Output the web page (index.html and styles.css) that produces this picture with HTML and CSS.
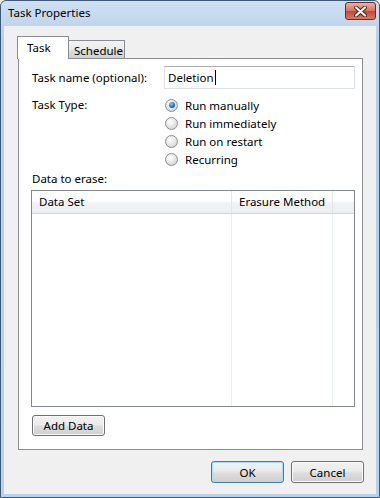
FILE: index.html
```html
<!DOCTYPE html>
<html>
<head>
    <title>Task Properties</title>
    <link rel="stylesheet" href="styles.css">
</head>
<body>
    <div class="window">
        <div class="titlebar">
            <span class="title">Task Properties</span>
            <span class="close">
                <svg width="13" height="11" viewBox="0 0 13 11">
                    <path d="M2 1.5 L11 9.5 M11 1.5 L2 9.5" stroke="#4a1c18" stroke-width="4" stroke-linecap="round"/>
                    <path d="M2 1.5 L11 9.5 M11 1.5 L2 9.5" stroke="#ffffff" stroke-width="2.2" stroke-linecap="round"/>
                </svg>
            </span>
        </div>
        <div class="client">
            <div class="tabs">
                <div class="tab active">Task</div>
                <div class="tab">Schedule</div>
            </div>
            <div class="page">
                <div class="form-grid">
                    <label class="lbl lbl-input" for="nama">Task name (optional):</label>
                    <div class="textbox" id="nama">Deletion<span class="caret"></span></div>

                    <div class="lbl lbl-radio">Task Type:</div>
                    <div class="radios">
                        <div class="radio-row"><span class="radio checked"></span>Run manually</div>
                        <div class="radio-row"><span class="radio"></span>Run immediately</div>
                        <div class="radio-row"><span class="radio"></span>Run on restart</div>
                        <div class="radio-row"><span class="radio"></span>Recurring</div>
                    </div>
                </div>

                <div class="lbl lbl-data">Data to erase:</div>
                <div class="listview">
                    <div class="lv-header">
                        <div class="col col-set">Data Set</div>
                        <div class="col col-method">Erasure Method</div>
                        <div class="col col-fill"></div>
                    </div>
                    <div class="lv-body">
                        <div class="col col-set"></div>
                        <div class="col col-method"></div>
                        <div class="col col-fill"></div>
                    </div>
                </div>

                <button class="btn btn-add" type="button">Add Data</button>
            </div>
            <div class="footer">
                <button class="btn btn-default" type="button">OK</button>
                <button class="btn" type="button">Cancel</button>
            </div>
        </div>
    </div>
</body>
</html>
```
FILE: styles.css
```css
body{
    margin: 0;
    background-color: #ffffff;
    font-family: "Noto Sans", "Open Sans", sans-serif;
    font-size: 11.5px;
    color: #000000;
}

.window{
    width: 380px;
    height: 498px;
    box-sizing: border-box;
    border: 1px solid #3e5877;
    border-radius: 6px 6px 0 0;
    padding: 0 3px 3px 3px;
    background: linear-gradient(#cfe0f3, #b6cfea 40px, #b9d1ea);
    display: flex;
    flex-direction: column;
}

.titlebar{
    height: 25px;
    display: flex;
    align-items: center;
    justify-content: space-between;
    padding-left: 4px;
}

.title{
    font-size: 11.5px;
    padding-bottom: 2px;
}

.close{
    width: 29px;
    height: 16px;
    margin-bottom: 5px;
    border: 1px solid #6b2a24;
    border-radius: 3px;
    background: linear-gradient(#eeb0a2, #d8705f 50%, #c34634 51%, #d77a62);
    display: flex;
    align-items: center;
    justify-content: center;
}

.client{
    flex: 1;
    background-color: #f0f0f0;
    padding: 11px 13px 11px 14px;
    display: flex;
    flex-direction: column;
}

.tabs{
    height: 22px;
    display: flex;
    align-items: flex-end;
    margin-bottom: -1px;
}

.tab{
    height: 19px;
    box-sizing: border-box;
    padding: 0 0 0 5px;
    border: 1px solid #898c95;
    border-bottom: none;
    background: linear-gradient(#f2f2f2, #ebebeb 50%, #dddddd 51%, #cfcfcf);
    line-height: 19px;
    width: 57px;
}

.tab.active{
    height: 23px;
    width: 52px;
    margin-left: -1px;
    margin-right: -1px;
    padding-left: 9px;
    background: #ffffff;
    line-height: 22px;
    position: relative;
    z-index: 1;
}

.page{
    flex: 1;
    background-color: #ffffff;
    border: 1px solid #898c95;
    padding: 7px 7px 12px 12px;
    display: flex;
    flex-direction: column;
}

.form-grid{
    display: grid;
    grid-template-columns: 133px 1fr;
    row-gap: 7px;
}

.lbl{
    padding-left: 1px;
}

.lbl-input{
    line-height: 23px;
}

.lbl-radio{
    line-height: 18px;
}

.textbox{
    height: 23px;
    box-sizing: border-box;
    border: 1px solid #dbdfe6;
    border-top-color: #abadb3;
    border-left-color: #e2e3ea;
    padding-left: 3px;
    display: flex;
    align-items: center;
}

.caret{
    display: inline-block;
    width: 1px;
    height: 15px;
    background-color: #000000;
    margin-left: 1px;
}

.radio-row{
    height: 18px;
    display: flex;
    align-items: center;
    padding-left: 1px;
}

.radio{
    width: 11px;
    height: 11px;
    border: 1px solid #8e8f8f;
    border-radius: 50%;
    background: radial-gradient(circle at 40% 35%, #ffffff, #e8e8e8 45%, #c8c8c8);
    margin-right: 7px;
    display: flex;
    align-items: center;
    justify-content: center;
}

.radio.checked::after{
    content: "";
    width: 6px;
    height: 6px;
    border-radius: 50%;
    background: radial-gradient(circle at 40% 35%, #8cd0ff, #1f6fc0 55%, #0b3f7a);
}

.lbl-data{
    margin-top: 3px;
    line-height: 16px;
    margin-bottom: 3px;
}

.listview{
    height: 217px;
    box-sizing: border-box;
    border: 1px solid #828790;
    display: flex;
    flex-direction: column;
}

.lv-header{
    height: 22px;
    display: flex;
    background: linear-gradient(#ffffff, #ffffff 45%, #f1f2f4 55%, #eceef0);
    border-bottom: 1px solid #d5d5d5;
}

.lv-header .col{
    line-height: 22px;
    border-right: 1px solid #e3e5e8;
    padding-left: 7px;
}

.lv-body{
    flex: 1;
    display: flex;
}

.lv-body .col{
    border-right: 1px solid #e6eff7;
}

.col-set{
    width: 200px;
    box-sizing: border-box;
}

.col-method{
    width: 101px;
    box-sizing: border-box;
}

.col-fill{
    flex: 1;
    border-right: none !important;
}

.btn{
    width: 73px;
    height: 21px;
    box-sizing: border-box;
    border: 1px solid #707070;
    border-radius: 3px;
    background: linear-gradient(#f2f2f2, #ebebeb 45%, #dddddd 55%, #cfcfcf);
    box-shadow: inset 0 0 0 1px #fbfbfb;
    font-family: "Noto Sans", "Open Sans", sans-serif;
    font-size: 11.5px;
    padding: 0;
    color: #000000;
}

.btn-add{
    margin-top: 8px;
    margin-left: 1px;
}

.btn-default{
    border-color: #3c7fb1;
    box-shadow: inset 0 0 0 1px #a7dcf7;
}

.footer{
    display: flex;
    justify-content: flex-end;
    gap: 7px;
    margin-top: 11px;
    margin-right: -1px;
    height: 22px;
}

.footer .btn{
    height: 22px;
}
```
